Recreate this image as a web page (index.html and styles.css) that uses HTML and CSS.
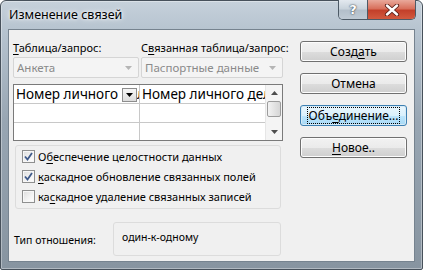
FILE: index.html
```html
<!DOCTYPE html>
<html lang="ru">
<head>
<meta charset="utf-8">
<title>Изменение связей</title>
<link rel="stylesheet" href="styles.css">
</head>
<body>
<div class="window">
  <div class="titlebar">
    <span class="title">Изменение связей</span>
    <div class="caption-buttons">
      <div class="cap help">?</div>
      <div class="cap close">
        <svg width="16" height="12" viewBox="0 0 16 12"><path d="M3 1.5 L13 10.5 M13 1.5 L3 10.5" stroke="#5a1f18" stroke-width="4.2" stroke-linecap="round"/><path d="M3 1.5 L13 10.5 M13 1.5 L3 10.5" stroke="#ffffff" stroke-width="2.4" stroke-linecap="round"/></svg>
      </div>
    </div>
  </div>
  <div class="client">
    <div class="left">
      <div class="fields">
        <div class="lbl"><u>Т</u>аблица/запрос:</div>
        <div class="lbl">С<u>в</u>язанная таблица/запрос:</div>
        <div class="combo disabled"><span class="combo-text">Анкета</span><svg class="combo-arrow" width="7" height="4" viewBox="0 0 7 4"><path d="M0 0 H7 L3.5 4 Z" fill="#b5b5b5"/></svg></div>
        <div class="combo disabled"><span class="combo-text">Паспортные данные</span><svg class="combo-arrow" width="7" height="4" viewBox="0 0 7 4"><path d="M0 0 H7 L3.5 4 Z" fill="#b5b5b5"/></svg></div>
      </div>
      <div class="grid">
        <div class="rows">
          <div class="row">
            <div class="cell c1"><span class="cell-text">Номер личного дела</span><span class="dd"><svg width="7" height="4" viewBox="0 0 7 4"><path d="M0 0 H7 L3.5 4 Z" fill="#000"/></svg></span></div>
            <div class="cell c2"><span class="cell-text">Номер личного дела</span></div>
          </div>
          <div class="row">
            <div class="cell c1"></div>
            <div class="cell c2"></div>
          </div>
          <div class="row last">
            <div class="cell c1"></div>
            <div class="cell c2"></div>
          </div>
        </div>
        <div class="vscroll">
          <div class="sb-arrow"><svg width="7" height="4" viewBox="0 0 7 4"><path d="M0 4 H7 L3.5 0 Z" fill="#4d4d4d"/></svg></div>
          <div class="sb-track"><div class="sb-thumb"></div></div>
          <div class="sb-arrow"><svg width="7" height="4" viewBox="0 0 7 4"><path d="M0 0 H7 L3.5 4 Z" fill="#4d4d4d"/></svg></div>
        </div>
      </div>
      <div class="group">
        <div class="check"><span class="box checked"><svg width="9" height="9" viewBox="0 0 9 9"><path d="M1 4.5 L3.5 7.5 L8 1" fill="none" stroke="#3f5a8a" stroke-width="1.8"/></svg></span><span>О<u>б</u>еспечение целостности данных</span></div>
        <div class="check"><span class="box checked"><svg width="9" height="9" viewBox="0 0 9 9"><path d="M1 4.5 L3.5 7.5 L8 1" fill="none" stroke="#3f5a8a" stroke-width="1.8"/></svg></span><span><u>к</u>аскадное обновление связанных полей</span></div>
        <div class="check"><span class="box"></span><span>ка<u>с</u>кадное удаление связанных записей</span></div>
      </div>
      <div class="type-row">
        <span class="type-label">Тип отношения:</span>
        <div class="type-value">один-к-одному</div>
      </div>
    </div>
    <div class="buttons">
      <div class="btn">Созд<u>а</u>ть</div>
      <div class="btn">Отмена</div>
      <div class="btn focused"><span class="focus-rect">Объ<u>е</u>динение...</span></div>
      <div class="btn"><span><u>Н</u>овое..</span></div>
    </div>
  </div>
</div>
</body>
</html>
```

FILE: styles.css
```css
html, body {
  margin: 0;
  padding: 0;
  background: #ffffff;
}

body {
  font-family: "Noto Sans", "Open Sans", sans-serif;
  font-size: 11px;
  color: #000;
}

u {
  text-decoration: underline;
  text-underline-offset: 2px;
}

.window {
  width: 423px;
  height: 270px;
  box-sizing: border-box;
  border: 1px solid #47515b;
  border-radius: 6px 6px 2px 2px;
  background: linear-gradient(180deg, #c6d1db 0px, #b7c4d0 28px, #98a6b3 120px, #8794a0 100%);
  box-shadow: inset 0 0 0 1px rgba(255, 255, 255, 0.35);
  padding: 0 7px 7px 7px;
  display: flex;
  flex-direction: column;
}

.titlebar {
  height: 28px;
  flex: none;
  display: flex;
  align-items: flex-start;
}

.title {
  line-height: 28px;
  font-size: 12.5px;
  padding-left: 1px;
  text-shadow: 0 0 6px #ffffff, 0 0 3px #ffffff;
}

.caption-buttons {
  margin-left: auto;
  margin-top: -1px;
  margin-right: -1px;
  display: flex;
  height: 19px;
  border: 1px solid #4d5a66;
  border-top: none;
  border-radius: 0 0 5px 5px;
  overflow: hidden;
}

.cap {
  height: 19px;
  display: flex;
  align-items: center;
  justify-content: center;
}

.help {
  width: 28px;
  border-right: 1px solid #4d5a66;
  background: linear-gradient(180deg, #e3e9ef 0%, #c9d3dc 45%, #b3bfca 55%, #bfcad4 100%);
  color: #ffffff;
  font-family: "DejaVu Sans", sans-serif;
  font-weight: bold;
  font-size: 13px;
  text-shadow: 0 0 1px #3d4650, 0 0 2px #3d4650;
}

.close {
  width: 47px;
  background: linear-gradient(180deg, #e9a99b 0%, #d8705c 45%, #c3402a 55%, #d25a3f 100%);
}

.client {
  flex: 1;
  background: #f0f0f0;
  border: 1px solid #76838f;
  display: flex;
  align-items: flex-start;
}

.left {
  width: 270px;
  flex: none;
  margin-left: 4px;
  padding-top: 10px;
  display: flex;
  flex-direction: column;
}

.fields {
  display: grid;
  grid-template-columns: 126px 142px;
  column-gap: 2px;
  row-gap: 1px;
}

.lbl {
  line-height: 16px;
  white-space: nowrap;
  min-width: 0;
}

.combo {
  height: 21px;
  min-width: 0;
  box-sizing: border-box;
  border: 1px solid #d5d5d5;
  border-radius: 2px;
  background: #f4f4f4;
  display: flex;
  align-items: center;
  padding: 0 6px 0 3px;
  color: #8a8a8a;
  font-size: 11.5px;
}

.combo-text {
  flex: 1;
  white-space: nowrap;
  overflow: hidden;
}

.combo-arrow {
  flex: none;
}

.grid {
  margin-top: 6px;
  height: 57px;
  box-sizing: border-box;
  border: 1px solid #7a7a7a;
  background: #ffffff;
  display: flex;
}

.rows {
  flex: 1;
  min-width: 0;
  display: flex;
  flex-direction: column;
}

.row {
  height: 19px;
  display: flex;
  border-bottom: 1px solid #c8c8c8;
  box-sizing: border-box;
}

.row.last {
  flex: 1;
  border-bottom: none;
}

.cell {
  box-sizing: border-box;
  overflow: hidden;
  display: flex;
  align-items: center;
  font-size: 13.5px;
  white-space: nowrap;
  min-width: 0;
}

.c1 {
  width: 126px;
  flex: none;
  border-right: 1px solid #c8c8c8;
  padding-left: 2px;
  position: relative;
}

.c2 {
  flex: 1;
  padding-left: 2px;
}

.cell-text {
  line-height: 18px;
}

.dd {
  position: absolute;
  right: 2px;
  top: 3px;
  width: 15px;
  height: 14px;
  box-sizing: border-box;
  border: 1px solid #8d8d8d;
  background: linear-gradient(180deg, #f6f6f6 0%, #dcdcdc 100%);
  box-shadow: -4px 0 0 #ffffff;
  display: flex;
  align-items: center;
  justify-content: center;
}

.vscroll {
  width: 16px;
  flex: none;
  border-left: 1px solid #e6e6e6;
  background: #f4f4f4;
  display: flex;
  flex-direction: column;
}

.sb-arrow {
  height: 16px;
  display: flex;
  align-items: center;
  justify-content: center;
}

.sb-track {
  flex: 1;
  display: flex;
  flex-direction: column;
}

.sb-thumb {
  height: 16px;
  margin: 0 1px;
  box-sizing: border-box;
  border: 1px solid #9c9c9c;
  border-radius: 2px;
  background: linear-gradient(90deg, #f3f3f3 0%, #e4e4e4 50%, #d6d6d6 100%);
}

.group {
  margin-top: 4px;
  margin-left: 2px;
  width: 266px;
  height: 64px;
  box-sizing: border-box;
  border: 1px solid #dcdcdc;
  border-radius: 3px;
  padding-left: 6px;
  display: flex;
  flex-direction: column;
  font-size: 11px;
}

.check {
  height: 20px;
  display: flex;
  align-items: center;
  gap: 3px;
  white-space: nowrap;
}

.box {
  width: 13px;
  height: 13px;
  box-sizing: border-box;
  border: 1px solid #8e8f8f;
  background: linear-gradient(135deg, #dcdcdc 0%, #f4f4f4 60%, #ffffff 100%);
  box-shadow: inset 0 0 0 1px #f7f7f7;
  display: flex;
  align-items: center;
  justify-content: center;
  flex: none;
}

.type-row {
  margin-top: 13px;
  height: 34px;
  display: flex;
  align-items: center;
  font-size: 10.5px;
}

.type-label {
  margin-left: 1px;
  padding-top: 2px;
}

.type-value {
  margin-left: auto;
  margin-right: 2px;
  width: 168px;
  height: 34px;
  box-sizing: border-box;
  border: 1px solid #dcdcdc;
  border-radius: 3px;
  padding: 6px 0 0 8px;
  line-height: 16px;
}

.buttons {
  margin-left: 17px;
  padding-top: 11px;
  display: flex;
  flex-direction: column;
  gap: 11px;
  font-size: 12px;
}

.btn {
  width: 107px;
  height: 21px;
  box-sizing: border-box;
  border: 1px solid #707070;
  border-radius: 3px;
  background: linear-gradient(180deg, #f2f2f2 0%, #ebebeb 50%, #dddddd 51%, #cfcfcf 100%);
  box-shadow: inset 0 0 0 1px #fcfcfc;
  display: flex;
  align-items: center;
  justify-content: center;
  line-height: 15px;
}

.btn.focused {
  border-color: #3c7fb1;
  background: linear-gradient(180deg, #eaf6fd 0%, #d9f0fc 50%, #bee6fd 51%, #a7d9f5 100%);
  box-shadow: inset 0 0 0 1px #d6eaf6;
}

.focus-rect {
  outline: 1px dotted #000;
  outline-offset: 0;
  padding: 0 1px;
}
```
